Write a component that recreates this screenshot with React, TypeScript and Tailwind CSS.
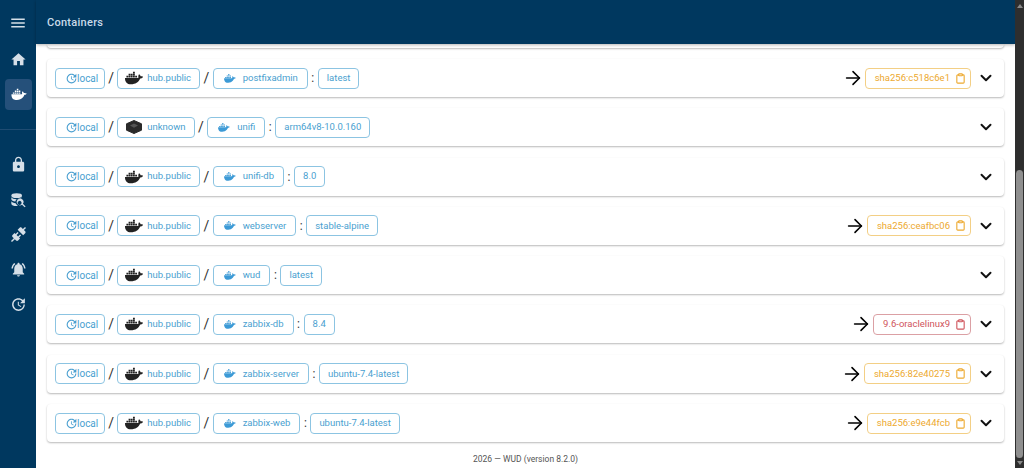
import React from 'react';
import { ArrowRight, ChevronDown, Clipboard } from 'lucide-react';
import { FaDocker } from 'react-icons/fa';
import { MdHome, MdLock, MdMenu, MdNotificationsActive, MdUpdate } from 'react-icons/md';

type Row = {
  registry: string;
  name: string;
  tag: string;
  update?: string;
  danger?: boolean;
};

const rows: Row[] = [
  { registry: 'hub.public', name: 'postfixadmin', tag: 'latest', update: 'sha256:c518c6e1' },
  { registry: 'unknown', name: 'unifi', tag: 'arm64v8-10.0.160' },
  { registry: 'hub.public', name: 'unifi-db', tag: '8.0' },
  { registry: 'hub.public', name: 'webserver', tag: 'stable-alpine', update: 'sha256:ceafbc06' },
  { registry: 'hub.public', name: 'wud', tag: 'latest' },
  { registry: 'hub.public', name: 'zabbix-db', tag: '8.4', update: '9.6-oraclelinux9', danger: true },
  { registry: 'hub.public', name: 'zabbix-server', tag: 'ubuntu-7.4-latest', update: 'sha256:82e40275' },
  { registry: 'hub.public', name: 'zabbix-web', tag: 'ubuntu-7.4-latest', update: 'sha256:e9e44fcb' },
];

const Whale: React.FC<{ size: number; className?: string }> = ({ size, className }) => (
  <svg width={size} height={size} viewBox="0 0 24 24" fill="currentColor" className={className}>
    <path d="M21.8 10.25C21.2 9.85 20.3 9.7 19.35 9.9C19.15 8.5 18 7.8 17.9 7.8L17.65 7.65L17.45 7.9C16.85 8.9 16.7 10.3 17.3 11.3C16.8 11.55 16 11.65 15.8 11.65H2.6C2.3 11.65 2 11.9 2 12.25C2 13.5 2.2 14.75 2.65 15.9C3.1 17.2 3.85 18.15 4.8 18.7C5.85 19.35 7.6 19.75 9.55 19.75C13.2 19.75 16.1 18.6 18.05 16.3C19.2 15 19.85 13.6 20.35 12.35H20.55C21.8 12.35 23.1 11.8 23.65 10.5Z" />
    <path d="M4 9h2.2v2H4zM6.8 9H9v2H6.8zM9.6 9h2.2v2H9.6zM12.4 9h2.2v2h-2.2zM6.8 6.4H9v2H6.8zM9.6 6.4h2.2v2H9.6zM12.4 6.4h2.2v2h-2.2zM9.6 3.8h2.2v2H9.6z" />
  </svg>
);

const Box = () => (
  <svg width="18" height="18" viewBox="0 0 18 18">
    <path d="M9 2.5 16.5 5.8V12.2L9 15.5 1.5 12.2V5.8Z" fill="#2a2a2a" stroke="#2a2a2a" strokeLinejoin="round" />
    <path d="M9 5.4 13 7.6 9 9.8 5 7.6Z" fill="#555" />
  </svg>
);

const DatabaseSearch = () => (
  <svg width="16" height="16" viewBox="0 0 24 24" fill="currentColor">
    <ellipse cx="10" cy="5.5" rx="8" ry="3.5" />
    <path d="M2 8v3c0 1.6 2.6 3 6 3.4.4-2.4 2.4-4.4 5-4.4 1 0 2 .2 5-2.2C17 9.8 14 11 10 11S3 9.8 2 8Z" />
    <path d="M2 14v3.5C2 19.4 5.6 21 10 21c.6 0 1.2 0 1.8-.1-1.6-1.2-2.8-2.6-3.4-3.9C5.4 16.8 3 15.6 2 14Z" />
    <path fillRule="evenodd" d="M18.7 11.3a5 5 0 1 0-.7 7.7l4 4 1.4-1.4-4-3.9a5 5 0 0 0-.7-6.4Zm-1.4 5.7a3 3 0 1 1-3.6-3.6 3 3 0 0 1 3.6 3.6Z" />
  </svg>
);

const Connection = () => (
  <svg width="17" height="17" viewBox="0 0 24 24" fill="currentColor">
    <path d="M21.4 7.5C22.2 8.3 22.2 9.6 21.4 10.3L18.6 13.1L10.8 5.3L13.6 2.5C14.4 1.7 15.7 1.7 16.4 2.5L18.2 4.3L21.2 1.3L22.6 2.7L19.6 5.7L21.4 7.5M15.6 13.3L14.2 11.9L11.4 14.7L9.3 12.6L12.1 9.8L10.7 8.4L7.9 11.2L6.4 9.8L3.6 12.6C2.8 13.4 2.8 14.7 3.6 15.4L5.4 17.2L1.4 21.2L2.8 22.6L6.8 18.6L8.6 20.4C9.4 21.2 10.7 21.2 11.4 20.4L14.2 17.6L12.8 16.2L15.6 13.3Z" />
  </svg>
);

const Slash: React.FC<{ wide?: boolean }> = ({ wide }) => (
  <span className={wide ? 'w-[12.6px] text-center text-[14px] leading-none text-[#333]' : 'w-[12px] text-center text-[14px] leading-none text-[#333]'}>/</span>
);

const ContainerRow: React.FC<{ row: Row }> = ({ row }) => (
  <div className="h-[38px] shrink-0 bg-white rounded shadow-[0_1px_2px_rgba(0,0,0,0.28)] flex items-center pl-2 pr-[9px] text-[9.5px] text-[#4a9fd0]">
    <span className="h-[21px] flex items-center pl-[9px] pr-[6px] rounded border border-[#8cc4e2] whitespace-nowrap">
      <MdUpdate size={13} className="-mr-[1px]" />
      <span className="text-[10px]">local</span>
    </span>
    <Slash />
    <span className="h-[21px] flex items-center gap-[4px] pl-[7px] pr-[8px] rounded border border-[#8cc4e2] whitespace-nowrap">
      {row.registry === 'unknown' ? <Box /> : <FaDocker size={18} className="text-[#222]" />}
      {row.registry}
    </span>
    <Slash wide />
    <span className="h-[21px] flex items-center gap-[7px] px-[9px] rounded border border-[#8cc4e2] whitespace-nowrap">
      <Whale size={13} className="text-[#3c9ad6]" />
      {row.name}
    </span>
    <span className="w-[10px] text-center text-[12px] leading-none text-[#333]">:</span>
    <span className="h-[21px] flex items-center px-[8px] rounded border border-[#8cc4e2] whitespace-nowrap">{row.tag}</span>
    <div className="ml-auto flex items-center">
      {row.update && (
        <>
          <ArrowRight size={22} strokeWidth={1.7} className="text-black mr-[1px]" />
          <span
            className={
              row.danger
                ? 'h-[21px] flex items-center gap-[5px] pl-[9px] pr-[4px] rounded border border-[#dba0a4] text-[#d0555c]'
                : 'h-[21px] flex items-center gap-[5px] pl-[9px] pr-[4px] rounded border border-[#f3cf85] text-[#eda92f]'
            }
          >
            {row.update}
            <Clipboard size={11} strokeWidth={2.4} />
          </span>
        </>
      )}
      <ChevronDown size={18} strokeWidth={2.6} className="text-[#111] ml-[6px]" />
    </div>
  </div>
);

const NavIcon: React.FC<{ children: React.ReactNode; active?: boolean }> = ({ children, active }) => (
  <div className="h-[35px] w-full flex items-center justify-center">
    <div className={active ? 'w-[27px] h-[31px] rounded bg-[#25507a] flex items-center justify-center text-white' : 'flex items-center justify-center text-[#d5dfe8]'}>
      {children}
    </div>
  </div>
);

export default function App() {
  return (
    <div className="w-[1024px] h-[468px] overflow-hidden flex bg-white font-['Roboto','Liberation_Sans',sans-serif]">
      <aside className="w-[36px] shrink-0 bg-[#00385f] flex flex-col items-center">
        <div className="h-[42px] shrink-0 flex items-center pt-[3px]">
          <MdMenu size={18} className="text-[#d5dfe8]" />
        </div>
        <NavIcon><MdHome size={17} /></NavIcon>
        <NavIcon active><Whale size={17} /></NavIcon>
        <div className="w-full h-px bg-[#1f4c72] mt-[17px] mb-[17px]" />
        <NavIcon><MdLock size={17} /></NavIcon>
        <NavIcon><DatabaseSearch /></NavIcon>
        <NavIcon><Connection /></NavIcon>
        <NavIcon><MdNotificationsActive size={17} /></NavIcon>
        <NavIcon><MdUpdate size={17} /></NavIcon>
      </aside>
      <div className="flex-1 min-w-0 flex flex-col">
        <header className="h-[44px] shrink-0 bg-[#00385f] flex items-center pl-[11px] pt-[2px] text-[11px] font-medium tracking-wide text-[#c9dbe9] shadow-[0_1px_3px_rgba(0,0,0,0.3)]">
          Containers
        </header>
        <main className="flex-1 min-h-0 flex flex-col px-[11px] overflow-hidden">
          <div className="h-[4px] shrink-0 rounded-b shadow-[0_1px_2px_rgba(0,0,0,0.28)] mb-[11px]" />
          <div className="flex flex-col gap-[11.3px]">
            {rows.map((r) => (
              <ContainerRow key={r.name} row={r} />
            ))}
          </div>
          <footer className="mt-[11px] text-center text-[8.5px] text-[#555]">2026 — WUD (version 8.2.0)</footer>
        </main>
      </div>
      <div className="w-[9px] shrink-0 bg-[#2e2e2e] flex flex-col items-center">
        <span className="mt-[4px] w-0 h-0 border-x-[3px] border-x-transparent border-b-[4px] border-b-[#8a8a8a]" />
        <div className="mt-[162px] flex-1 w-[7px] rounded-full bg-[#8f8f8f]" />
        <span className="my-[3px] w-0 h-0 border-x-[3px] border-x-transparent border-t-[4px] border-t-[#8a8a8a]" />
      </div>
    </div>
  );
}
